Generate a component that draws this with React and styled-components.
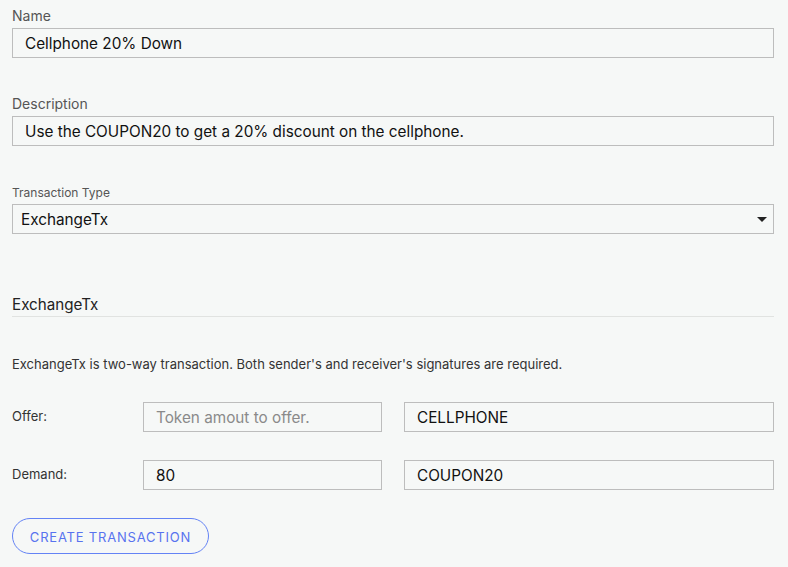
import React from "react";
import styled, { createGlobalStyle } from "styled-components";

const Global = createGlobalStyle`
  html, body {
    margin: 0;
    background: #f6f8f7;
  }
  body {
    font-family: Inter, "Noto Sans", "Liberation Sans", sans-serif;
    color: #222;
  }
`;

const Page = styled.form`
  padding: 6px 14px 12px 12px;
  display: flex;
  flex-direction: column;
`;

const Field = styled.div`
  display: flex;
  flex-direction: column;
  margin-bottom: ${(p) => p.$gap || 0}px;
`;

const Label = styled.label`
  font-size: ${(p) => (p.$small ? 12 : 14)}px;
  line-height: ${(p) => (p.$small ? 16 : 20)}px;
  color: #555;
  margin-bottom: ${(p) => (p.$small ? 3 : 2)}px;
`;

const Input = styled.input`
  box-sizing: border-box;
  width: 100%;
  height: 30px;
  margin: 0;
  padding: 0 12px;
  border: 1px solid #bdbdbd;
  border-radius: 0;
  background: #f6f8f7;
  font-family: inherit;
  font-size: 15.3px;
  color: #111;
  outline: none;
  &::placeholder {
    color: #8a8a8a;
  }
`;

const SelectWrap = styled.div`
  position: relative;
`;

const Select = styled.select`
  box-sizing: border-box;
  width: 100%;
  height: 30px;
  margin: 0;
  padding: 0 8px;
  border: 1px solid #bdbdbd;
  border-radius: 0;
  background: #f6f8f7;
  font-family: inherit;
  font-size: 15.3px;
  color: #111;
  appearance: none;
  -webkit-appearance: none;
  outline: none;
`;

const Caret = styled.svg`
  position: absolute;
  right: 7px;
  top: 13px;
  pointer-events: none;
`;

const Heading = styled.h3`
  margin: 0;
  font-size: 15.2px;
  font-weight: 400;
  line-height: 20px;
  color: #222;
  padding-bottom: 1px;
  border-bottom: 1px solid #e1e3e1;
`;

const Note = styled.p`
  margin: 38px 0 29px;
  font-size: 13px;
  line-height: 18px;
  color: #333;
`;

const Row = styled.div`
  display: grid;
  grid-template-columns: 109px 239px 1fr;
  column-gap: 22px;
  align-items: center;
  margin-bottom: 28px;
`;

const RowLabel = styled.span`
  font-size: 13px;
  color: #333;
  margin-top: -3px;
`;

const Button = styled.button`
  align-self: flex-start;
  box-sizing: border-box;
  width: 197px;
  height: 36px;
  padding-top: 2px;
  border: 1px solid #6483f5;
  border-radius: 18px;
  background: transparent;
  color: #5873ef;
  font-family: inherit;
  font-size: 13px;
  letter-spacing: 0.8px;
  cursor: pointer;
`;

export default function App() {
  return (
    <>
      <Global />
      <Page onSubmit={(e) => e.preventDefault()}>
        <Field $gap={36}>
          <Label>Name</Label>
          <Input defaultValue="Cellphone 20% Down" />
        </Field>
        <Field $gap={39}>
          <Label>Description</Label>
          <Input defaultValue="Use the COUPON20 to get a 20% discount on the cellphone." />
        </Field>
        <Field $gap={61}>
          <Label $small>Transaction Type</Label>
          <SelectWrap>
            <Select defaultValue="ExchangeTx">
              <option>ExchangeTx</option>
              <option>TransferTx</option>
            </Select>
            <Caret width="10" height="5" viewBox="0 0 10 5">
              <path d="M0 0 L10 0 L5 5 Z" fill="#222" />
            </Caret>
          </SelectWrap>
        </Field>
        <Heading>ExchangeTx</Heading>
        <Note>
          ExchangeTx is two-way transaction. Both sender's and receiver's
          signatures are required.
        </Note>
        <Row>
          <RowLabel>Offer:</RowLabel>
          <Input placeholder="Token amout to offer." />
          <Input defaultValue="CELLPHONE" />
        </Row>
        <Row>
          <RowLabel>Demand:</RowLabel>
          <Input defaultValue="80" />
          <Input defaultValue="COUPON20" />
        </Row>
        <Button type="submit">CREATE TRANSACTION</Button>
      </Page>
    </>
  );
}
